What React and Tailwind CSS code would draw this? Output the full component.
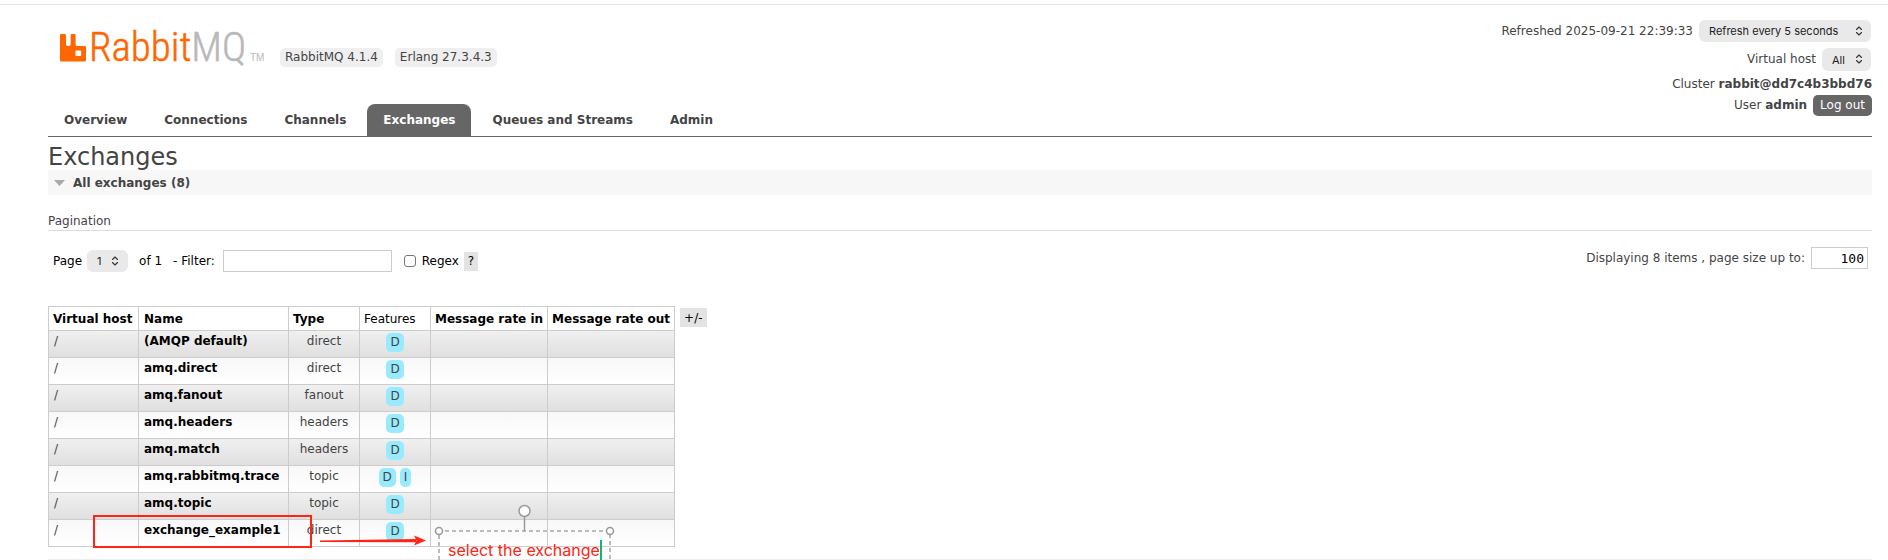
const tabs = ['Overview', 'Connections', 'Channels', 'Exchanges', 'Queues and Streams', 'Admin'];

const exchanges = [
  { name: '(AMQP default)', type: 'direct', features: ['D'] },
  { name: 'amq.direct', type: 'direct', features: ['D'] },
  { name: 'amq.fanout', type: 'fanout', features: ['D'] },
  { name: 'amq.headers', type: 'headers', features: ['D'] },
  { name: 'amq.match', type: 'headers', features: ['D'] },
  { name: 'amq.rabbitmq.trace', type: 'topic', features: ['D', 'I'] },
  { name: 'amq.topic', type: 'topic', features: ['D'] },
  { name: 'exchange_example1', type: 'direct', features: ['D'] },
];

function Logo() {
  return (
    <a href="#/" aria-label="RabbitMQ" className="block">
      <svg width="208" height="56" viewBox="0 -10 208 56" className="block">
        <path
          fill="#ff6600"
          d="M1.400 1H4.600a1.400 1.400 0 0 1 1.400 1.400v9.200A1.400 1.400 0 0 0 7.400 13H9.200a1.400 1.400 0 0 0 1.400-1.400V2.400A1.400 1.400 0 0 1 12 1h2.200a1.400 1.400 0 0 1 1.400 1.400v9.200A1.400 1.400 0 0 0 17 13h7.600A1.400 1.400 0 0 1 26 14.400V27.200a1.400 1.400 0 0 1-1.400 1.400H1.400A1.400 1.400 0 0 1 0 27.200V2.400A1.400 1.400 0 0 1 1.400 1ZM16.600 17.400a1.200 1.200 0 0 0-1.200 1.200v3.200a1.200 1.200 0 0 0 1.200 1.200h3.400a1.200 1.200 0 0 0 1.200-1.200v-3.200a1.200 1.200 0 0 0-1.200-1.200Z"
        />
        <text x="29" y="28" fontSize="41" strokeWidth="0.5" className="font-['Roboto_Condensed','Roboto','Liberation_Sans_Narrow',sans-serif] font-light">
          <tspan fill="#ff6600" stroke="#ff6600">Rabbit</tspan>
          <tspan fill="#b8b8b8" stroke="#b8b8b8">MQ</tspan>
        </text>
        <text x="190" y="28" fontSize="10" fill="#b8b8b8" className="font-['Liberation_Sans',sans-serif]">TM</text>
      </svg>
    </a>
  );
}

function Chevrons({ className }) {
  return (
    <svg width="8" height="10" viewBox="0 0 8 10" fill="none" stroke="#333" strokeWidth="1.1" strokeLinecap="round" strokeLinejoin="round" className={className}>
      <path d="M1.500 3.500 4 1l2.500 2.500M1.500 6.500 4 9l2.500-2.500" />
    </svg>
  );
}

function Select({ id, label, value, className }) {
  return (
    <span className="relative inline-flex">
      <select
        id={id}
        aria-label={label}
        className={"appearance-none rounded-md bg-[#e9e9e9] pl-[10px] font-['Inter',sans-serif] text-[11px] text-[#222] " + className}
      >
        <option>{value}</option>
      </select>
      <Chevrons className="pointer-events-none absolute right-[9px] top-[6px]" />
    </span>
  );
}

function Header() {
  return (
    <header className="flex items-start justify-between">
      <div className="flex items-start gap-3 pl-3 pt-[19px]">
        <Logo />
        <span className="mt-[25px] rounded-[5px] bg-[#efefef] px-[5px] leading-[19px]">RabbitMQ 4.1.4</span>
        <span className="mt-[25px] rounded-[5px] bg-[#efefef] px-[5px] leading-[19px]">Erlang 27.3.4.3</span>
      </div>
      <ul className="flex flex-col items-end pt-4">
        <li className="flex h-7 items-start gap-[6px] leading-[22px]">
          <span>Refreshed 2025-09-21 22:39:33</span>
          <Select label="Refresh interval" value="Refresh every 5 seconds" className="mr-px h-[22px] w-[172px]" />
        </li>
        <li className="flex h-[27px] items-start gap-[6px] leading-[22px]">
          <label htmlFor="vhost">Virtual host</label>
          <Select id="vhost" label="Virtual host" value="All" className="mr-px h-[23px] w-[49px]" />
        </li>
        <li className="h-5 leading-[18px]">
          Cluster <b>rabbit@dd7c4b3bbd76</b>
        </li>
        <li className="flex h-[21px] items-center gap-[6px] leading-[21px]">
          <span>
            User <b>admin</b>
          </span>
          <button className="h-[21px] rounded-[5px] bg-[#666] px-[7px] text-white">Log out</button>
        </li>
      </ul>
    </header>
  );
}

function Tabs() {
  return (
    <nav className="-mt-3 border-b border-[#666]">
      <ul className="flex gap-[5px]">
        {tabs.map((t) => (
          <li key={t}>
            <a
              href={'#/' + t}
              className={
                'block h-8 rounded-t-lg px-4 font-bold leading-[33px] ' +
                (t === 'Exchanges' ? 'bg-[#666] text-white' : 'text-[#444]')
              }
            >
              {t}
            </a>
          </li>
        ))}
      </ul>
    </nav>
  );
}

function Pager() {
  return (
    <div className="flex items-start justify-between pt-4">
      <div className="flex h-7 items-center pl-[5px] text-black">
        <label htmlFor="page" className="mr-[5px]">Page</label>
        <Select id="page" label="Page" value="1" className="h-[22px] w-[41px]" />
        <span className="ml-[11px]">of 1</span>
        <label htmlFor="filter" className="ml-[11px]">- Filter:</label>
        <input id="filter" type="text" className="ml-2 h-[22px] w-[169px] border border-[#ccc] bg-white" />
        <input id="regex" type="checkbox" className="ml-3 h-3 w-3 appearance-none rounded-[3px] border border-[#777] bg-white" />
        <label htmlFor="regex" className="ml-[6px]">Regex</label>
        <button aria-label="Filter help" className="ml-[5px] h-[19px] bg-[#e3e3e3] px-1">?</button>
      </div>
      <div className="flex items-center gap-[6px] pr-1">
        <label htmlFor="size">Displaying 8 items , page size up to:</label>
        <input
          id="size"
          type="text"
          defaultValue="100"
          className="h-[22px] w-[57px] border border-[#ccc] bg-white px-[3px] text-right font-['DejaVu_Sans_Mono',monospace] text-[13px] text-black"
        />
      </div>
    </div>
  );
}

function ExchangeTable() {
  const th = 'h-6 border border-[#ccc] px-1 text-left text-black leading-[22px] ';
  const td = 'h-[27px] border border-[#ccc] px-[5px] align-top leading-[21px] ';
  return (
    <table className="border-collapse whitespace-nowrap">
      <thead>
        <tr>
          <th className={th + 'w-[90px]'}>Virtual host</th>
          <th className={th + 'w-[150px] pl-[5px]'}>Name</th>
          <th className={th + 'w-[71px]'}>Type</th>
          <th className={th + 'w-[71px] font-normal'}>Features</th>
          <th className={th + 'w-[117px]'}>Message rate in</th>
          <th className={th + 'w-[127px]'}>Message rate out</th>
        </tr>
      </thead>
      <tbody>
        {exchanges.map((e, i) => (
          <tr key={e.name} className={i % 2 ? 'bg-linear-to-b from-[#f8f8f8] to-white' : 'bg-linear-to-b from-[#f0f0f0] to-[#dfdfdf]'}>
            <td className={td}>/</td>
            <td className={td}>
              <a href={'#/exchanges/' + i} className="font-bold text-black">{e.name}</a>
            </td>
            <td className={td + 'text-center'}>{e.type}</td>
            <td className={td}>
              <span className="flex justify-center gap-1 pt-[2px]">
                {e.features.map((f) => (
                  <abbr key={f} className="rounded-[5px] bg-[#98ebff] px-1 leading-[19px]">{f}</abbr>
                ))}
              </span>
            </td>
            <td className={td} />
            <td className={td} />
          </tr>
        ))}
      </tbody>
    </table>
  );
}

function Annotation() {
  return (
    <div className="pointer-events-none absolute left-0 top-0 h-[254px] w-[626px] overflow-hidden">
      <svg width="626" height="254" viewBox="0 0 626 254" fill="none" className="block">
        <rect x="46" y="210" width="217" height="31" stroke="#ff2414" strokeWidth="2" />
        <path d="M272 234.500 368 233v3.200l-96-.2Z" fill="#ff2414" />
        <path d="M378 234.500 366 229.500l2.500 5-2.500 5Z" fill="#ff2414" />
        <path d="M391 254V225H562V254" stroke="#bbb" strokeWidth="2" strokeDasharray="4 3" />
        <path d="M476.500 211V225" stroke="#999" strokeWidth="1.500" />
        <circle cx="476.500" cy="205" r="5.500" fill="#fff" stroke="#999" strokeWidth="1.500" />
        <circle cx="391" cy="225" r="3.500" fill="#fff" stroke="#999" strokeWidth="1.500" />
        <circle cx="562" cy="225" r="3.500" fill="#fff" stroke="#999" strokeWidth="1.500" />
      </svg>
      <span className="absolute left-[400px] top-[234px] flex h-5 items-center border-r-2 border-[#12b76a] font-['Inter',sans-serif] text-[16px] leading-5 whitespace-nowrap text-[#ff2414]">
        select the exchange
      </span>
    </div>
  );
}

export default function App() {
  return (
    <div className="bg-white font-['DejaVu_Sans',Verdana,sans-serif] text-[12px] text-[#444]">
      <div className="h-1" />
      <div className="border-t border-[#e4e4e4] pl-12 pr-4">
        <div className="-mt-px">
          <Header />
        </div>
        <Tabs />
        <main>
          <h1 className="pt-2 text-[24px] leading-[25px]">Exchanges</h1>
          <h2 className="flex h-[25px] items-center gap-2 bg-[#f7f7f7] pl-[6px] font-bold">
            <svg width="11" height="6" viewBox="0 0 11 6" fill="#aaa"><path d="M0 0H11L5.500 6Z" /></svg>
            All exchanges (8)
          </h2>
          <h3 className="mt-[17px] border-b border-[#ddd] leading-[18px]">Pagination</h3>
          <Pager />
          <div className="relative mt-[31px] flex items-start gap-[5px]">
            <ExchangeTable />
            <button aria-label="Choose columns" className="mt-[2px] h-[19px] bg-[#e3e3e3] px-1 text-black">+/-</button>
            <Annotation />
          </div>
          <hr className="mt-3 border-[#eee]" />
        </main>
      </div>
    </div>
  );
}
